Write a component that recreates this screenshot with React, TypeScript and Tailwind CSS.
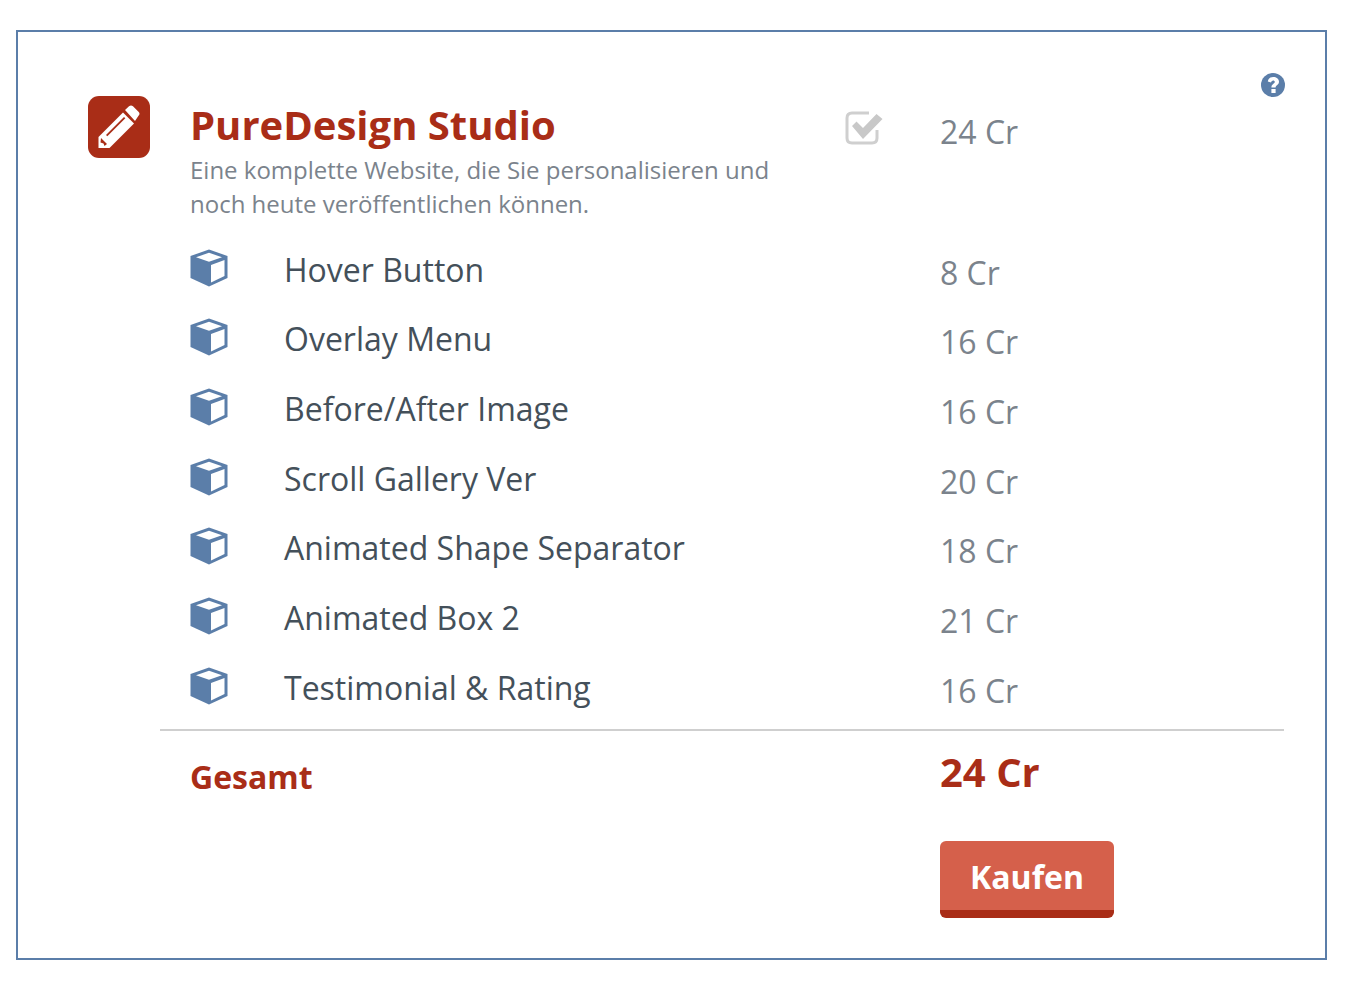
import React from "react";

const rows = [
  ["Hover Button", "8 Cr"],
  ["Overlay Menu", "16 Cr"],
  ["Before/After Image", "16 Cr"],
  ["Scroll Gallery Ver", "20 Cr"],
  ["Animated Shape Separator", "18 Cr"],
  ["Animated Box 2", "21 Cr"],
  ["Testimonial & Rating", "16 Cr"],
];

function Cube() {
  return (
    <svg width="38" height="38" viewBox="0 0 38 38" className="block">
      <path d="M19 0.5 L37.5 7 V29 L19 37.5 L0.5 29 V7 Z" fill="#5b7ea9" />
      <path d="M19 3.8 L32 8.2 L19 12.8 L6 8.2 Z" fill="#fff" />
      <path d="M21 16 L34.5 11 V27 L21 33.5 Z" fill="#fff" />
    </svg>
  );
}

function Pencil() {
  return (
    <svg width="62" height="62" viewBox="0 0 62 62" className="block">
      <rect width="62" height="62" rx="11" fill="#a92d17" />
      <path d="M10.5 52 V41 L35 16.5 L46 27.5 L21.5 52 Z" fill="#fff" />
      <path d="M37 14 L41 10.3 Q43 8.5 45 10.3 L50.5 15.8 Q52.5 17.8 50.5 19.8 L47 25 Z" fill="#fff" />
      <path d="M18 39 L36 21 L37.3 22.3 L19.3 40.3 Z" fill="#a92d17" />
      <path d="M13 42 L19 48 L16.5 50 L15.5 47.5 L12.5 46.5 Z" fill="#a92d17" />
    </svg>
  );
}

function Check() {
  return (
    <svg width="38" height="34" viewBox="0 0 38 34" className="block">
      <path
        d="M24 2 H7 Q2 2 2 7 V27 Q2 32 7 32 H27 Q32 32 32 27 V19"
        fill="none"
        stroke="#cfcfcf"
        strokeWidth="3"
      />
      <path d="M7 15 L11.5 10.5 L18 17 L31.5 3 L37.5 8 L18 28 Z" fill="#c8c8c8" />
    </svg>
  );
}

function Help() {
  return (
    <svg width="24" height="24" viewBox="0 0 24 24" className="block">
      <circle cx="12" cy="12" r="12" fill="#5b7ea9" />
      <path
        d="M6.8 8.6 C7.2 5.4 9.6 4 12.3 4 C15.3 4 18 5.8 18 8.8 C18 12 14.6 12 14.6 14.6 H10.4 C10.4 10.8 13.8 10.8 13.8 9 C13.8 8.2 13 7.6 12.2 7.6 C11.3 7.6 10.6 8.3 10 9.5 Z"
        fill="#fff"
      />
      <rect x="10.4" y="16" width="4.2" height="4" fill="#fff" />
    </svg>
  );
}

export default function App() {
  return (
    <div className="bg-white h-[998px] pt-[30px] pl-4 font-['Open_Sans',sans-serif]">
      <div className="relative w-[1311px] h-[930px] border-2 border-[#5b7ea9] pt-[64px]">
        <div className="absolute right-[40px] top-[41px]">
          <Help />
        </div>
        <div className="flex h-[139.6px]">
          <div className="ml-[70px] w-[102px] shrink-0">
            <Pencil />
          </div>
          <div className="w-[655px] shrink-0">
            <div className="text-[40px] leading-[58px] font-bold text-[#a92d17]">PureDesign Studio</div>
            <div className="text-[24px] leading-[34px] text-[#7b838c] w-[620px] -mt-[1px]">
              Eine komplette Website, die Sie personalisieren und noch heute veröffentlichen können.
            </div>
          </div>
          <div className="w-[95px] shrink-0 pt-[15px]">
            <Check />
          </div>
          <div className="text-[32px] leading-[44px] text-[#7b838c] pt-[14px]">24 Cr</div>
        </div>
        <div className="flex flex-col">
          {rows.map(([name, price]) => (
            <div key={name} className="flex h-[69.7px] items-start">
              <div className="ml-[172px] w-[94px] shrink-0 pt-[13px]">
                <Cube />
              </div>
              <div className="w-[656px] shrink-0 text-[32px] leading-[44px] text-[#44505a] pt-[12px]">{name}</div>
              <div className="text-[32px] leading-[44px] text-[#7b838c] pt-[15px]">{price}</div>
            </div>
          ))}
        </div>
        <div className="ml-[142px] mr-[41px] h-[2px] bg-[#cfcfcf] mt-[5.5px]" />
        <div className="flex">
          <div className="ml-[172px] w-[750px] shrink-0 text-[32px] leading-[44px] font-bold text-[#a92d17] pt-[24px]">Gesamt</div>
          <div className="text-[40px] leading-[54px] font-bold text-[#a92d17] pt-[14px]">24 Cr</div>
        </div>
        <div className="ml-[922px] mt-[42px] w-[174px] h-[77px] rounded-[6px] bg-[#d5604b] border-b-[8px] border-[#a92d17] flex items-center justify-center pt-[4px] text-[32px] font-bold text-white">
          Kaufen
        </div>
      </div>
    </div>
  );
}
